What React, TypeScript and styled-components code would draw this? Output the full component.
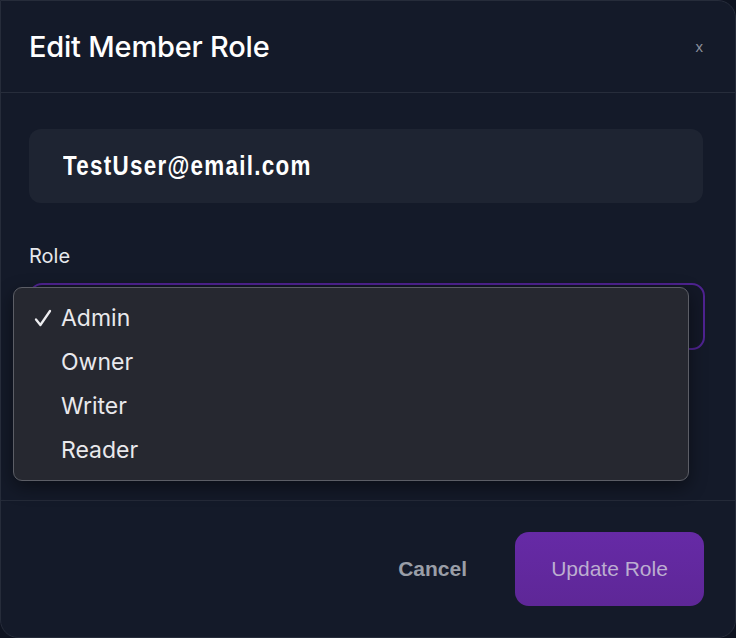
import React, { useState } from 'react';
import styled, { createGlobalStyle } from 'styled-components';

const GlobalStyle = createGlobalStyle`
  html, body {
    margin: 0;
    padding: 0;
    background: #0e1320;
  }
  body {
    font-family: Inter, "Noto Sans", sans-serif;
  }
  * {
    box-sizing: border-box;
  }
`;

const Modal = styled.div`
  width: 736px;
  height: 638px;
  background: #141a29;
  border: 1px solid #262c3a;
  border-radius: 0 18px 18px 18px;
  display: flex;
  flex-direction: column;
  overflow: hidden;
`;

const Header = styled.div`
  height: 92px;
  flex: none;
  display: flex;
  align-items: center;
  justify-content: space-between;
  padding: 0 32px 0 28px;
  border-bottom: 1px solid #272d3b;
`;

const Title = styled.h2`
  margin: 0;
  font-size: 29px;
  font-weight: 500;
  color: #ffffff;
  letter-spacing: -0.2px;
`;

const CloseButton = styled.button`
  border: none;
  background: none;
  color: #8b909c;
  font-family: "Liberation Sans", Arial, sans-serif;
  font-size: 15px;
  padding: 0;
  cursor: pointer;
`;

const Body = styled.div`
  flex: 1;
  padding: 36px 30px 0 28px;
  display: flex;
  flex-direction: column;
`;

const EmailBox = styled.div`
  height: 74px;
  border-radius: 12px;
  background: #1e2432;
  display: flex;
  align-items: center;
  padding: 0 34px;
  margin-right: 2px;
`;

const Email = styled.span`
  display: inline-block;
  font-family: "Liberation Sans", Arial, sans-serif;
  font-weight: 700;
  font-size: 28px;
  letter-spacing: 1.6px;
  color: #ffffff;
  transform: scaleX(0.8);
  transform-origin: left center;
  white-space: nowrap;
`;

const Label = styled.div`
  margin-top: 41px;
  font-size: 20px;
  color: #e6e8ec;
`;

const SelectWrap = styled.div`
  position: relative;
  margin-top: 15px;
`;

const SelectBox = styled.div`
  height: 67px;
  border: 2px solid #4f2391;
  border-radius: 13px;
  background: #131827;
`;

const Menu = styled.ul`
  position: absolute;
  top: 4px;
  left: -16px;
  width: 676px;
  margin: 0;
  padding: 8px 0;
  list-style: none;
  background: #262830;
  border: 1px solid #5c5e66;
  border-radius: 9px;
  box-shadow: 0 6px 18px rgba(0, 0, 0, 0.45);
`;

const MenuItem = styled.li`
  height: 44px;
  display: flex;
  align-items: center;
  padding-left: 47px;
  position: relative;
  font-size: 23px;
  color: #e9e9ec;
  cursor: default;
`;

const Check = styled.span`
  position: absolute;
  left: 19px;
  top: 50%;
  transform: translateY(-50%);
  display: flex;
`;

const Footer = styled.div`
  height: 137px;
  flex: none;
  border-top: 1px solid #242a38;
  display: flex;
  align-items: center;
  justify-content: flex-end;
  gap: 48px;
  padding: 0 31px 0 0;
`;

const CancelButton = styled.button`
  border: none;
  background: none;
  font-family: "Liberation Sans", Arial, sans-serif;
  font-weight: 700;
  font-size: 21px;
  color: #9a9ea7;
  cursor: pointer;
  padding: 0;
`;

const PrimaryButton = styled.button`
  width: 189px;
  height: 74px;
  border: none;
  border-radius: 14px;
  background: linear-gradient(180deg, #662aa6 0%, #5e2797 100%);
  font-family: "Liberation Sans", Arial, sans-serif;
  font-size: 21px;
  color: #bcaed0;
  cursor: pointer;
`;

const roles = ['Admin', 'Owner', 'Writer', 'Reader'];

const CheckIcon = () => (
  <svg width="20" height="20" viewBox="0 0 20 20" fill="none">
    <path d="M3 11.5 L7.4 17 L17 3" stroke="#ededf0" strokeWidth="2.3" strokeLinecap="round" strokeLinejoin="round" />
  </svg>
);

const App: React.FC = () => {
  const [role, setRole] = useState('Admin');

  return (
    <>
      <GlobalStyle />
      <Modal>
        <Header>
          <Title>Edit Member Role</Title>
          <CloseButton>x</CloseButton>
        </Header>
        <Body>
          <EmailBox>
            <Email>TestUser@email.com</Email>
          </EmailBox>
          <Label>Role</Label>
          <SelectWrap>
            <SelectBox />
            <Menu>
              {roles.map(r => (
                <MenuItem key={r} onClick={() => setRole(r)}>
                  {role === r && (
                    <Check>
                      <CheckIcon />
                    </Check>
                  )}
                  {r}
                </MenuItem>
              ))}
            </Menu>
          </SelectWrap>
        </Body>
        <Footer>
          <CancelButton>Cancel</CancelButton>
          <PrimaryButton>Update Role</PrimaryButton>
        </Footer>
      </Modal>
    </>
  );
};

export default App;
